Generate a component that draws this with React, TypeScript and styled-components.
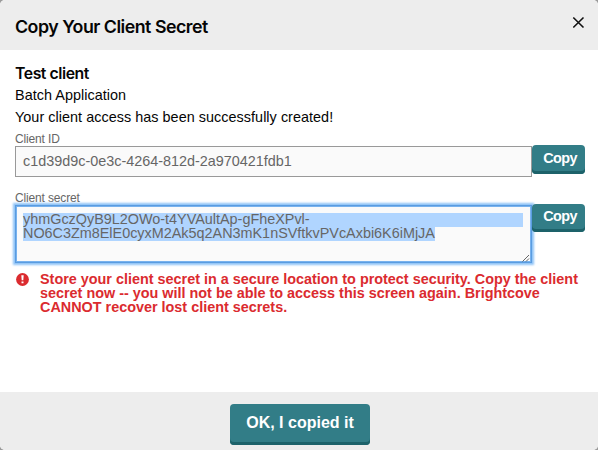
import React from "react";
import styled, { createGlobalStyle } from "styled-components";

const GlobalStyle = createGlobalStyle`
  * { box-sizing: border-box; }
  body { margin: 0; background: #9b9b9b; font-family: "Liberation Sans", Arial, sans-serif; }
`;

const Dialog = styled.div`
  width: 598px;
  height: 450px;
  display: flex;
  flex-direction: column;
  background: #fff;
  border-radius: 5px;
  overflow: hidden;
  color: #050505;
`;

const Header = styled.header`
  height: 50px;
  flex: none;
  display: flex;
  justify-content: space-between;
  padding: 14px 13px 0 15px;
  background: #ededed;
`;

const Title = styled.h1`
  margin: 0;
  font: 600 17.8px/25px Inter, sans-serif;
  letter-spacing: -0.5px;
  white-space: nowrap;
`;

const CloseButton = styled.button`
  width: 13px;
  height: 13px;
  margin-top: 2px;
  padding: 0;
  border: 0;
  background: none;
  svg { display: block; }
`;

const Body = styled.main`
  flex: 1;
  padding: 14px 13px 0 15px;
`;

const ClientName = styled.h2`
  margin: 0;
  font: 600 15.8px/20px Inter, sans-serif;
  letter-spacing: -0.45px;
`;

const Line = styled.p`
  margin: 0;
  font-size: 14.4px;
  line-height: 22px;
  letter-spacing: 0.04px;
  white-space: nowrap;
`;

const Field = styled.div<{ $height: number }>`
  height: ${(p) => p.$height}px;
`;

const Label = styled.label`
  display: block;
  height: 17px;
  padding-top: 5px;
  font-size: 12px;
  line-height: 12px;
  letter-spacing: -0.15px;
  color: #666;
`;

const FieldRow = styled.div`
  display: flex;
  align-items: flex-start;
`;

const IdBox = styled.div`
  width: 517px;
  height: 31px;
  margin-top: 1px;
  padding-left: 7px;
  border: 1px solid #999;
  background: #fafafa;
  font-size: 14.4px;
  line-height: 29px;
  color: #666;
`;

const SecretBox = styled.div`
  position: relative;
  width: 517px;
  height: 58px;
  margin-top: 1px;
  padding: 7px 7px 0;
  border: 1px solid #5a9ce0;
  background: #fafafa;
  box-shadow: 0 0 2px 2px #8fc3f7, inset 0 0 0 1px #78b2ee;
  font-size: 14.4px;
  line-height: 13px;
  color: #666;
`;

const Selected = styled.div<{ $width: number }>`
  width: ${(p) => p.$width}px;
  height: 14px;
  background: #b0d5ff;
  white-space: nowrap;
`;

const ResizeGrip = styled.svg`
  position: absolute;
  right: 1px;
  bottom: 0;
`;

const CopyButton = styled.button<{ $height: number }>`
  position: relative;
  width: 53px;
  height: ${(p) => p.$height}px;
  padding: 0 0 4px 3px;
  border: 0;
  border-radius: 4px;
  background: #327d87;
  box-shadow: inset 0 -3px #1d626a;
  color: #fff;
  font: 700 14.4px/16px "Liberation Sans", Arial, sans-serif;
  letter-spacing: -0.6px;
`;

const Warning = styled.div`
  display: flex;
  gap: 11px;
  color: #db2b2f;
  font-weight: 700;
  font-size: 14.4px;
  line-height: 14px;
  svg { flex: none; margin: 1px 0 0 1px; }
`;

const WarningLine = styled.div`
  white-space: nowrap;
`;

const Footer = styled.footer`
  height: 58px;
  flex: none;
  display: flex;
  justify-content: center;
  align-items: flex-start;
  padding: 12px 0 0 2px;
  background: #ededed;
`;

const ConfirmButton = styled.button`
  width: 140px;
  height: 41px;
  padding: 0 0 3px;
  border: 0;
  border-radius: 4px;
  background: #327d87;
  box-shadow: inset 0 -3px #1d626a;
  color: #fff;
  font: 700 16px/20px "Liberation Sans", Arial, sans-serif;
`;

export default function App() {
  return (
    <>
      <GlobalStyle />
      <Dialog role="dialog">
        <Header>
          <Title>Copy Your Client Secret</Title>
          <CloseButton aria-label="Close">
            <svg width="13" height="13" viewBox="0 0 13 13">
              <path d="M1.3 1.5 11.5 11.5M11.5 1.5 1.3 11.5" stroke="#111" strokeWidth="1.6" />
            </svg>
          </CloseButton>
        </Header>
        <Body>
          <ClientName>Test client</ClientName>
          <Line>Batch Application</Line>
          <Line>Your client access has been successfully created!</Line>
          <Field $height={59}>
            <Label>Client ID</Label>
            <FieldRow>
              <IdBox>c1d39d9c-0e3c-4264-812d-2a970421fdb1</IdBox>
              <CopyButton $height={29}>Copy</CopyButton>
            </FieldRow>
          </Field>
          <Field $height={85}>
            <Label>Client secret</Label>
            <FieldRow>
              <SecretBox>
                <Selected $width={500}>yhmGczQyB9L2OWo-t4YVAultAp-gFheXPvl-</Selected>
                <Selected $width={412}>NO6C3Zm8ElE0cyxM2Ak5q2AN3mK1nSVftkvPVcAxbi6K6iMjJA</Selected>
                <ResizeGrip width="8" height="8" viewBox="0 0 8 8">
                  <path d="M.5 7.5 7 1M4 7.5 7 4.5" stroke="#555" strokeWidth=".9" fill="none" />
                </ResizeGrip>
              </SecretBox>
              <CopyButton $height={28}>Copy</CopyButton>
            </FieldRow>
          </Field>
          <Warning>
            <svg width="13" height="13" viewBox="0 0 13 13">
              <circle cx="6.5" cy="6.5" r="6.4" fill="#db2b2f" />
              <path d="M5.3 2.3h2.4l-.4 5H5.7zM5.5 8.4h2v1.9h-2z" fill="#fff" />
            </svg>
            <div>
              <WarningLine>Store your client secret in a secure location to protect security. Copy the client</WarningLine>
              <WarningLine>secret now -- you will not be able to access this screen again. Brightcove</WarningLine>
              <WarningLine>CANNOT recover lost client secrets.</WarningLine>
            </div>
          </Warning>
        </Body>
        <Footer>
          <ConfirmButton>OK, I copied it</ConfirmButton>
        </Footer>
      </Dialog>
    </>
  );
}
